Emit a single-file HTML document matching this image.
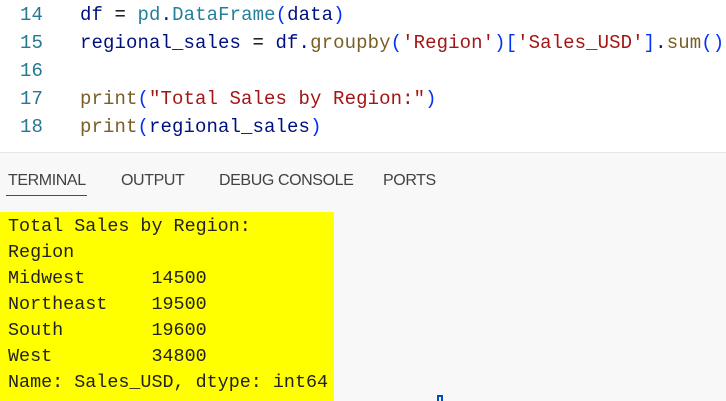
<!DOCTYPE html>
<html style="overflow:hidden;height:401px"><head><style>
body{margin:0;width:726px;height:401px;overflow:hidden;background:#fff;position:relative;font-family:"Liberation Mono",monospace}
.ed{position:absolute;left:0;top:0;width:726px;height:152px;background:#fff}
.l{position:absolute;left:0;height:28px;font-size:19px;line-height:28px;white-space:pre;letter-spacing:0.1px}
.n{position:absolute;left:20px;color:#237893;width:40px}
.c{position:absolute;left:80px;color:#001080}
.k{color:#795e26}.s{color:#a31515}.t{color:#267f99}.p{color:#0431fa}.d{color:#000}
.panel{position:absolute;left:0;top:152px;width:726px;height:249px;background:#f8f8f8;border-top:1px solid #e5e5e5;overflow:hidden}
.tab{position:absolute;top:19px;font-family:"Liberation Sans",sans-serif;font-size:16px;color:#424242;letter-spacing:-0.4px}
.ul{position:absolute;left:6px;top:42px;width:81px;height:1px;background:#005fb8}
.y{position:absolute;left:0;top:59px;width:334px;height:190px;background:#ffff00}
.tl{position:absolute;left:8px;font-size:18.4px;line-height:26px;white-space:pre;color:#222}
</style></head><body>
<div class="ed">
<div class="l" style="top:1px"><span class="n">14</span><span class="c">df <span class="d">=</span> <span class="t">pd</span>.<span class="t">DataFrame</span><span class="p">(</span>data<span class="p">)</span></span></div>
<div class="l" style="top:29px"><span class="n">15</span><span class="c">regional_sales <span class="d">=</span> df.<span class="k">groupby</span><span class="p">(</span><span class="s">'Region'</span><span class="p">)[</span><span class="s">'Sales_USD'</span><span class="p">]</span>.<span class="k">sum</span><span class="p">()</span></span></div>
<div class="l" style="top:57px"><span class="n">16</span></div>
<div class="l" style="top:85px"><span class="n">17</span><span class="c"><span class="k">print</span><span class="p">(</span><span class="s">"Total Sales by Region:"</span><span class="p">)</span></span></div>
<div class="l" style="top:113px"><span class="n">18</span><span class="c"><span class="k">print</span><span class="p">(</span>regional_sales<span class="p">)</span></span></div>
</div>
<div class="panel">
<span class="tab" style="left:8px">TERMINAL</span>
<span class="tab" style="left:121px">OUTPUT</span>
<span class="tab" style="left:219px">DEBUG CONSOLE</span>
<span class="tab" style="left:383px">PORTS</span>
<div class="ul"></div>
<div class="y"></div>
<div class="tl" style="top:61px">Total Sales by Region:</div>
<div class="tl" style="top:87px">Region</div>
<div class="tl" style="top:113px">Midwest      14500</div>
<div class="tl" style="top:139px">Northeast    19500</div>
<div class="tl" style="top:165px">South        19600</div>
<div class="tl" style="top:191px">West         34800</div>
<div class="tl" style="top:217px">Name: Sales_USD, dtype: int64</div>
<div style="position:absolute;left:437px;top:242px;width:6px;height:9px;border:2px solid #0050c0;border-bottom:none;box-sizing:border-box"></div>
</div>
</body></html>
